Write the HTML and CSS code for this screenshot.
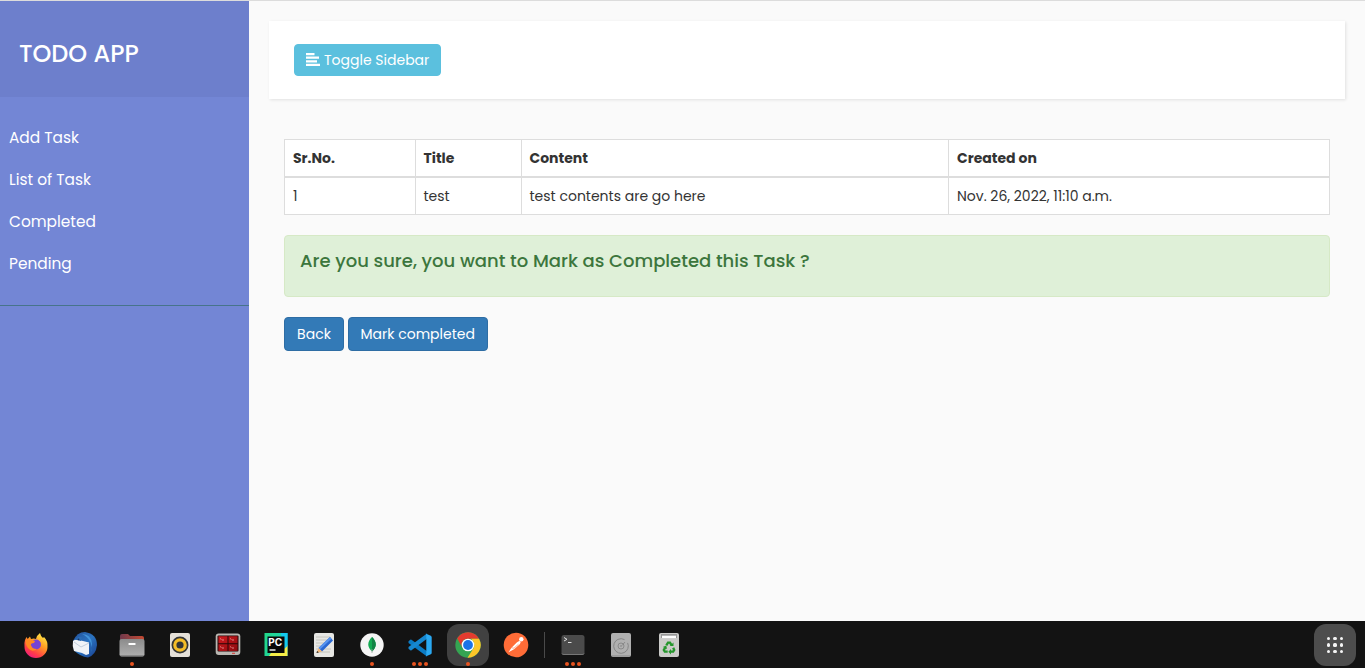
FILE: index.html
```html
<!DOCTYPE html>
<html lang="en">
<head>
<meta charset="utf-8">
<title>TODO APP</title>
<link rel="stylesheet" href="styles.css">
</head>
<body>
<div class="wrapper">
  <nav class="sidebar">
    <header class="sidebar-header"><h3 class="brand">TODO APP</h3></header>
    <ul class="menu">
      <li><a>Add Task</a></li>
      <li><a>List of Task</a></li>
      <li><a>Completed</a></li>
      <li><a>Pending</a></li>
    </ul>
  </nav>
  <main class="content">
    <div class="navbar">
      <button class="btn btn-info"><svg width="14" height="13" viewBox="0 0 14 13" fill="#fff"><path d="M0 0h8.500v2.200H0zM0 3.600h13v2.200H0zM0 7.200h11v2.200H0zM0 10.800h14V13H0z"/></svg><span>Toggle Sidebar</span></button>
    </div>
    <section class="panel">
      <table class="table">
        <colgroup><col class="c1"><col class="c2"><col class="c3"><col class="c4"></colgroup>
        <thead><tr><th>Sr.No.</th><th class="inner">Title</th><th class="inner">Content</th><th>Created on</th></tr></thead>
        <tbody><tr><td>1</td><td class="inner">test</td><td class="inner">test contents are go here</td><td>Nov. 26, 2022, 11:10 a.m.</td></tr></tbody>
      </table>
      <div class="alert"><h4 class="question">Are you sure, you want to Mark as Completed this Task ?</h4></div>
      <div class="actions">
        <button class="btn btn-primary back">Back</button>
        <button class="btn btn-primary mark">Mark completed</button>
      </div>
    </section>
  </main>
</div>
<footer class="dock">
  <div class="app"><svg viewBox="0 0 26 26"><defs><linearGradient id="ff" x1=".8" y1="0" x2=".2" y2="1"><stop offset="0" stop-color="#fff04a"/><stop offset=".4" stop-color="#ff9b22"/><stop offset=".75" stop-color="#ff3d48"/><stop offset="1" stop-color="#ec1588"/></linearGradient></defs><path d="M2 8L3.500 5l1.200 2L7 4.500 8 7q3-1 5 0 1-4 4-6 .500 3 3 5l1-1q4 4 3.500 10A11.500 11 0 0 1 1.500 15Q1 11 2 8z" fill="url(#ff)"/><circle cx="13" cy="12.500" r="5" fill="#7543d4"/><path d="M3 8q5-1 9 1l-1 2q-4 0-3 2.500 1 3.500 6 3.500-5 4-9-1Q2 12 3 8z" fill="#ff8a20"/></svg></div>
  <div class="app"><svg viewBox="0 0 26 26"><defs><linearGradient id="tb" x1="0" x2="1" y2="1"><stop stop-color="#235098"/><stop offset=".5" stop-color="#2b73c0"/><stop offset="1" stop-color="#183f8e"/></linearGradient></defs><path d="M2 9Q6 0 14 0q12 2 12 13-1 10-9 12.500-8-1-14-7z" fill="url(#tb)"/><path d="M11 2q9 0 10 10l-1 9Q23 8 11 2z" fill="#4294da"/><path d="M2 9q2-2 6-1l10 2.500v11.500l-3 1-4-2-8-2q-2-5-1-10z" fill="#f0f3f7"/><path d="M3 10l7 5 8-4" fill="none" stroke="#b6c4d5" stroke-width=".8"/><path d="M4 8Q7 4 11 5l-1 4-4-1z" fill="#2a6cb5"/><circle cx="7.500" cy="7.300" r=".9" fill="#1b315b"/></svg></div>
  <div class="app"><svg viewBox="0 0 26 26"><defs><linearGradient id="fo"><stop stop-color="#70394c"/><stop offset="1" stop-color="#c44a32"/></linearGradient><linearGradient id="fg" y2="1" x2="0"><stop stop-color="#8b8b8b"/><stop offset="1" stop-color="#b0b0b0"/></linearGradient></defs><path d="M1 4q0-2 2-2h6l2 2h12q2 0 2 2v4H1z" fill="url(#fo)"/><rect x=".5" y="7" width="25" height="17.500" rx="2" fill="url(#fg)"/><path d="M1 23.500h24" stroke="#888"/><rect x="9.500" y="11" width="7" height="2" rx=".5" fill="#fff"/></svg><i class="dots"><b></b></i></div>
  <div class="app"><svg viewBox="0 0 26 26"><rect x="3" y="1" width="20" height="24" rx="2" fill="#e5e0d8"/><circle cx="13" cy="13" r="8.500" fill="#343638"/><circle cx="13" cy="13" r="5.200" fill="none" stroke="#f4bd28" stroke-width="3.200"/><circle cx="13" cy="13" r="2.600" fill="#343638"/></svg></div>
  <div class="app"><svg viewBox="0 0 26 26"><defs><linearGradient id="rd" x2="1" y2="1"><stop stop-color="#d01b20"/><stop offset="1" stop-color="#8c090d"/></linearGradient></defs><rect x=".7" y="1.500" width="24.600" height="21.500" rx="3" fill="#b9b7b2"/><rect x="2.500" y="3.500" width="21" height="16" rx="1" fill="#260607"/><path d="M3.500 4.300h9v6.900h-9zM13.500 4.300h9v6.900h-9zM3.500 12.300h9V19h-9zM13.500 12.300h9V19h-9z" fill="url(#rd)"/><path d="M5 6.500L6.500 7.500M7 8h2M15 6.500l1.500 1M17 8h2M5 14.500l1.500 1M7 16h2M15 14.500l1.500 1M17 16h2" fill="none" stroke="#f4b5b4" stroke-width=".7"/><path d="M17 21.300h3" stroke="#d43b35"/></svg></div>
  <div class="app"><svg viewBox="0 0 26 26"><defs><linearGradient id="py" x2="1" y2=".25"><stop stop-color="#21d789"/><stop offset=".6" stop-color="#20d5a0"/><stop offset="1" stop-color="#09c8f0"/></linearGradient></defs><path d="M1.500 1h23v23h-23z" fill="url(#py)"/><path d="M20 3l4.500 11v10H6z" fill="#f6ed47"/><path d="M18 1h6.500v13L20 18z" fill="#14c9ed"/><rect x="4.500" y="4.500" width="17" height="16.500" fill="#080808"/><text class="pc" x="5.200" y="13.500">PC</text><path d="M6.500 18h6" stroke="#fff" stroke-width="1.400"/></svg></div>
  <div class="app"><svg viewBox="0 0 26 26"><rect x="3" y="1" width="20" height="24" rx="2" fill="#e7e7e4"/><path d="M5 5h14M5 8h12M5 11h10M5 14h9M5 17h15M5 20h14" stroke="#bcbdb3" stroke-width=".8"/><path d="M19 5l3 3.500L11 19.500 7.500 16z" fill="#2968d2"/><path d="M19 5l1.500 1.700L9 17.500 7.500 16z" fill="#5794ef"/><path d="M7.500 16l3.500 3.500L5.500 21z" fill="#f2b77a"/><path d="M6.300 19l1.500 1.500L5.500 21z" fill="#222"/></svg></div>
  <div class="app"><svg viewBox="0 0 26 26"><circle cx="13" cy="13" r="11.700" fill="#f5f5f5"/><path d="M13 5c5 5 5 10 0 14.500C8 15 8 10 13 5z" fill="#13aa52"/><path d="M13 5c5 5 5 10 0 14.500z" fill="#128345"/><path d="M13 17v4" stroke="#9aa79f" stroke-width=".8"/></svg><i class="dots"><b></b></i></div>
  <div class="app"><svg viewBox="0 0 26 26"><path d="M1.500 9.300l1.800-1.600q.6-.4 1.200 0L20 19.300v5.200L1.500 11z" fill="#0b7bc4"/><path d="M1.500 16.700l1.800 1.600q.6.400 1.200 0L20 6.700V1.500L1.500 15z" fill="#1687cf"/><path d="M18 1.200l5.800 2.500q.9.500.9 1.500v15.600q0 1-.9 1.500L18 24.800q1.300-.3 1.300-1.800V3q0-1.500-1.300-1.800z" fill="#2aa9f2"/></svg><i class="dots"><b></b><b></b><b></b></i></div>
  <div class="app active"><svg viewBox="0 0 26 26"><circle cx="13" cy="13" r="12.700" fill="#35a552"/><path d="M2.200 6.300A12.700 12.700 0 0 1 24 6.700H13a6.300 6.300 0 0 0-5.500 9.500z" fill="#e33b2f"/><path d="M24 6.700A12.700 12.700 0 0 1 12.500 25.700l6-9.500q2.500-5-2.500-9.500z" fill="#fcc629"/><circle cx="13" cy="13" r="6.300" fill="#fff"/><circle cx="13" cy="13" r="4.900" fill="#1a73e8"/></svg><i class="dots"><b></b></i></div>
  <div class="app"><svg viewBox="0 0 26 26"><circle cx="13" cy="13" r="12.300" fill="#ff6c37"/><path d="M5.500 20.300l3-4.500 5-5q2-2.200 3.700-1.800 1.200 1.500-.7 3.500l-5.500 4.700z" fill="#fff"/><circle cx="18.300" cy="7.300" r="2.200" fill="#fff"/><path d="M8.500 15.800l2.500.4 4.500-4" fill="none" stroke="#f57a4d" stroke-width=".6"/></svg></div>
  <div class="separator"></div>
  <div class="app"><svg viewBox="0 0 26 26"><rect x="1.500" y="3" width="23" height="20" rx="2.500" fill="#4b4b4b"/><path d="M2 21.500q0 1 2 1h18q2 0 2-1" fill="none" stroke="#777"/><path d="M4 5.500l3 1.800L4 9M8 10.500h3.500" fill="none" stroke="#ddd"/></svg><i class="dots"><b></b><b></b><b></b></i></div>
  <div class="app"><svg viewBox="0 0 26 26"><rect x="3" y="1" width="20" height="24" rx="2" fill="#b0b0b0"/><path d="M4 24h18" stroke="#888"/><circle cx="13" cy="14" r="7.300" fill="none" stroke="#808080" stroke-width=".8" stroke-dasharray="41 5" transform="rotate(-25 13 14)"/><circle cx="13" cy="14" r="3" fill="none" stroke="#808080" stroke-width=".8"/><path d="M14 13.500l3-3.500" stroke="#808080" stroke-width=".8"/><circle cx="13" cy="14" r=".8" fill="#808080"/></svg></div>
  <div class="app"><svg viewBox="0 0 26 26"><rect x="3" y="1" width="20" height="24" rx="2" fill="#cbcbc9"/><path d="M5 2h16v4H5z" fill="#999"/><path d="M6 4.900h14" stroke="#fff" stroke-width="2.400"/><g fill="none" stroke="#25962c" stroke-width="2.300"><path d="M10.300 13.300l1.700-2.700h2l1.700 2.700M17.200 15.800l1 2.200-1 1.700h-3M11.700 19.700H8.800L7.800 18l1.400-2.400"/></g><path d="M13.900 13.900h3.600v-3.500zM15 17l-2.700 2.700L15 22.400zM6.800 15l3.400-1.500.9 3.500z" fill="#25962c"/></svg></div>
  <div class="launcher"><i></i><i></i><i></i><i></i><i></i><i></i><i></i><i></i><i></i></div>
</footer>
</body>
</html>
```

FILE: styles.css
```css
* { box-sizing: border-box; }
body { margin: 0; height: 668px; overflow: hidden; display: flex; flex-direction: column; background: #fafafa; color: #333; font-family: Poppins, Inter, "Open Sans", sans-serif; font-size: 14px; line-height: 20px; }
.wrapper { flex: 1; display: flex; border-top: 1px solid #dcdcdc; }
.sidebar { width: 249px; background: #7386d5; color: #fff; }
.sidebar-header { height: 96px; padding: 40px 19px; background: #6d7fcc; }
.brand { margin: 0; font-size: 24px; line-height: 26px; font-weight: 500; white-space: nowrap; }
.menu { margin: 0; padding: 20px 0; list-style: none; border-bottom: 1px solid #47748b; }
.menu li { height: 42px; padding: 9px; font-size: 15.4px; line-height: 24px; }
.content { flex: 1; padding: 20px 20px 0; }
.navbar { height: 78px; padding: 23px 25px; background: #fff; box-shadow: 1px 1px 3px rgba(0,0,0,.1); }
.btn { display: flex; align-items: center; justify-content: center; padding: 0; border: 1px solid; border-radius: 4px; color: #fff; font: inherit; white-space: nowrap; }
.btn-info { width: 147px; height: 32px; background: #5bc0de; border-color: #5bc0de; gap: 4px; justify-content: flex-start; padding-left: 11px; }
.btn-info svg { margin-top: -1px; }
.panel { padding: 40px 15px 0; }
.table { width: 1046px; table-layout: fixed; border-collapse: collapse; background: #fff; }
.c1 { width: 131px; }
.c2 { width: 106px; }
.c3 { width: 427px; }
.table th, .table td { padding: 8px; border: 1px solid #ddd; line-height: 20px; text-align: left; }
.table th { height: 37px; padding-bottom: 7.5px; border-bottom-width: 2px; font-weight: 700; }
.table td { height: 38px; padding-top: 8.5px; }
.table .inner { padding-left: 7.5px; }
.alert { height: 62px; margin-top: 20px; padding: 15px; border: 1px solid #d6e9c6; border-radius: 4px; background: #dff0d8; color: #3c763d; }
.question { margin: 0; font-size: 18px; line-height: 20px; font-weight: 500; }
.actions { display: flex; gap: 4px; margin-top: 20px; }
.btn-primary { height: 34px; background: #337ab7; border-color: #2e6da4; }
.back { width: 60px; }
.mark { width: 140px; padding-right: .5px; }
.dock { height: 47px; padding: 0 9px 0 12px; display: flex; background: #131313; }
.app { width: 48px; height: 47px; position: relative; display: flex; align-items: center; justify-content: center; }
.app svg { width: 26px; height: 26px; position: relative; }
.active::before { content: ""; position: absolute; left: 3px; top: 3px; width: 42px; height: 42px; border-radius: 12px; background: #414141; }
.dots { position: absolute; left: 0; right: 0; bottom: 2px; display: flex; justify-content: center; gap: 2px; }
.dots b { width: 4px; height: 4px; border-radius: 50%; background: #e95420; }
.pc { font: 700 10px Inter, sans-serif; fill: #fff; }
.separator { width: 1px; height: 26px; margin: 11px 4px 0; background: #4a4a4a; }
.launcher { width: 42px; height: 42px; margin: 3px 0 0 auto; padding: 12.5px 12px; border-radius: 12px; background: #4d4d4d; display: grid; grid-template-columns: repeat(3, 3.5px); grid-auto-rows: 3.5px; gap: 3px; justify-content: center; }
.launcher i { border-radius: 1.5px; background: #f4f4f4; }
```
